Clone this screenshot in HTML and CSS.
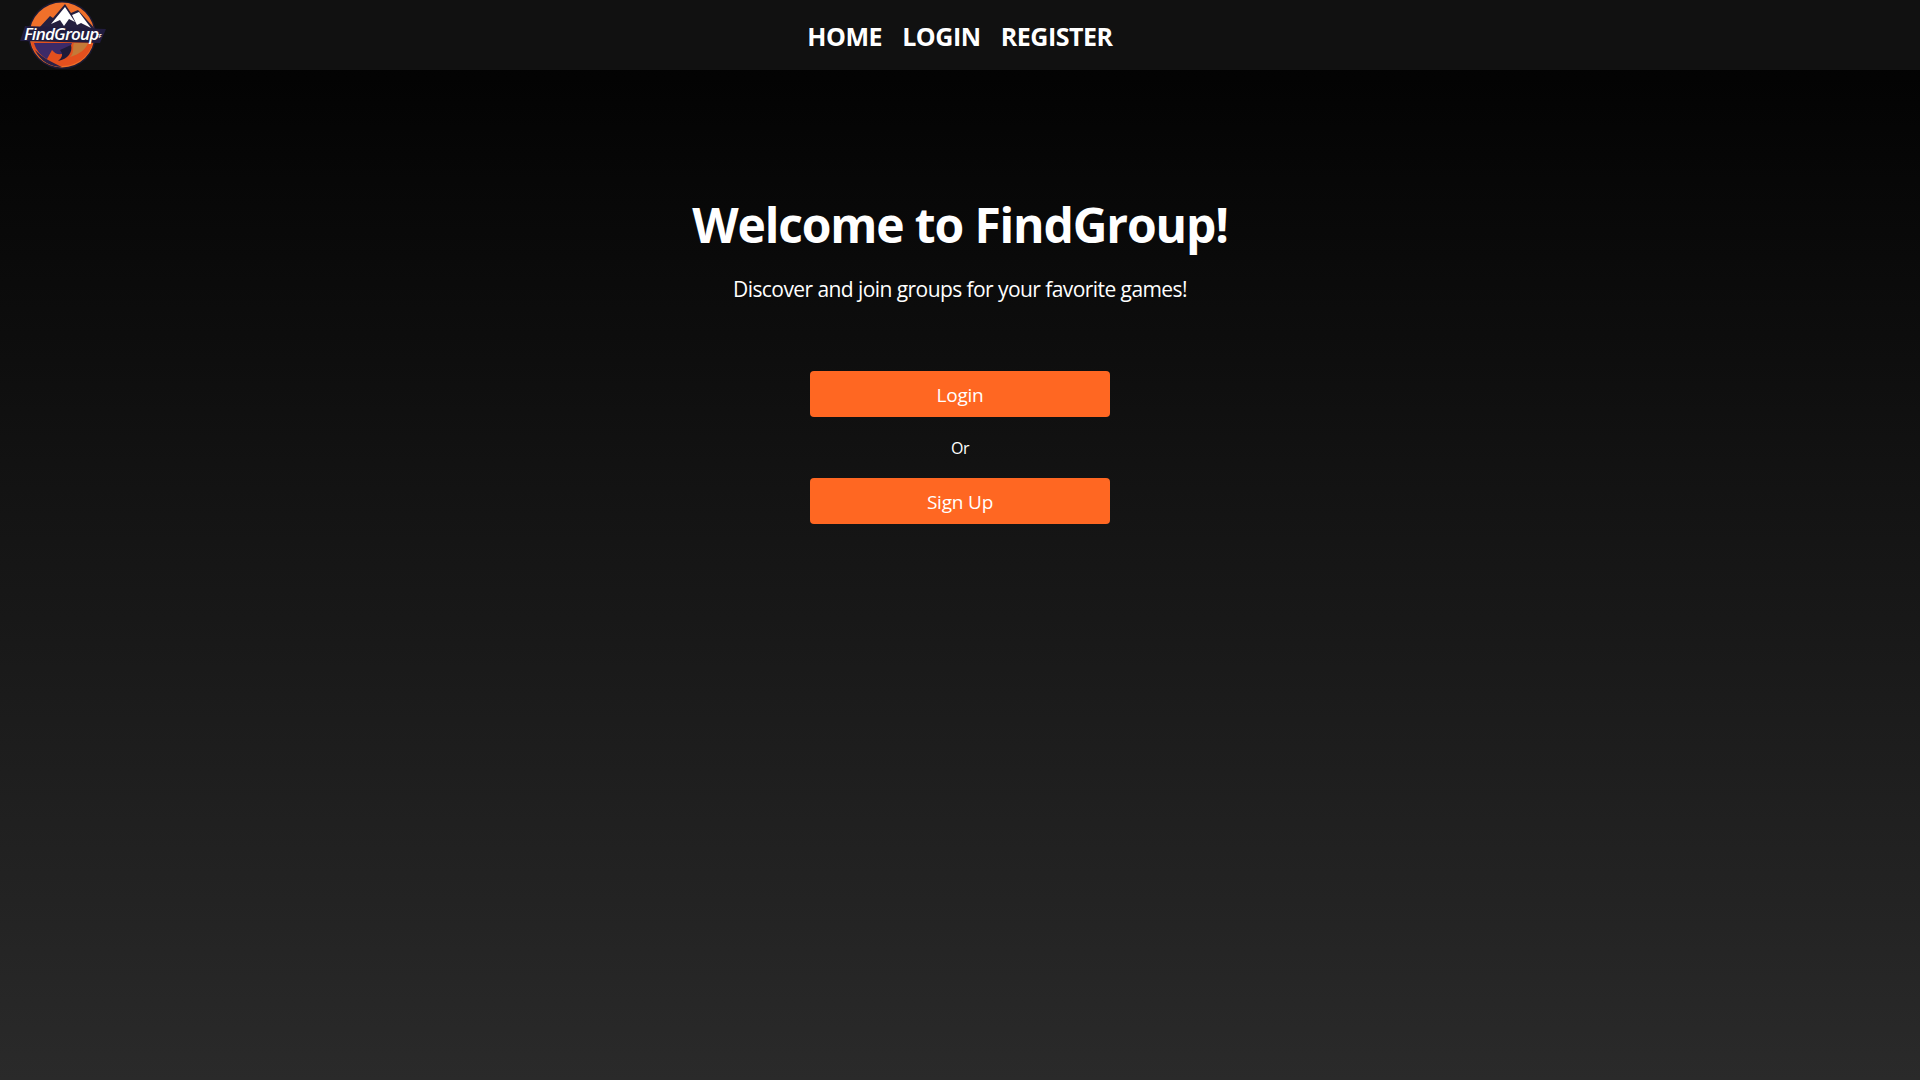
FILE: index.html
```html
<!DOCTYPE html>
<html lang="en">
<head>
<meta charset="utf-8">
<title>FindGroup</title>
<link rel="stylesheet" href="styles.css">
</head>
<body>
<header class="navbar">
  <a class="logo" href="#" aria-label="FindGroup">
    <svg class="logo-art" viewBox="20 0 90 70" width="90" height="70">
      <circle cx="62" cy="35" r="34" fill="#1d1a33"/>
      <circle cx="62" cy="35" r="32.5" fill="#f0702a"/>
      <path d="M31 42 C33 54 44 65 62 66 C78 66 90 55 93 42 Z" fill="#e4501e"/>
      <path d="M34 43 C36 50 40 55 47 59 L52 50 C58 58 68 54 72 43 Z" fill="#3d2a68"/>
      <path d="M74 43 L88 43 C86 49 80 54 70 57 C75 52 72 48 74 43 Z" fill="#c47a38"/>
      <path d="M35 50 C41 62 51 67 62 67 C52 62 44 59 35 50 Z" fill="#2a2148"/>
      <path d="M60 50 L71 45 C73 52 68 59 58 61 C63 57 63 54 60 50 Z" fill="#1f1a38"/>
      <path d="M38 29 L50 16 L53 18 L65 4 L71 13 L78 10 L95 29 Z" fill="#241f3f"/>
      <path d="M51 24 L65 7 L75 22 L69 19 L64 26 L60 20 Z" fill="#fff"/>
      <path d="M72 15 L79 12 L91 28 L81 23 L77 25 Z" fill="#fff"/>
      <path d="M25 26 L106 29 L100 43 L20 41 Z" fill="#211c3e"/>
    </svg>
    <span class="logo-text">FindGroup</span>
    <span class="logo-mark">FF</span>
  </a>
  <nav class="nav-links">
    <a href="#">HOME</a>
    <a href="#">LOGIN</a>
    <a href="#">REGISTER</a>
  </nav>
</header>
<main class="hero">
  <h1>Welcome to FindGroup!</h1>
  <p class="tagline">Discover and join groups for your favorite games!</p>
  <div class="actions">
    <a class="btn" href="#">Login</a>
    <span class="or">Or</span>
    <a class="btn" href="#">Sign Up</a>
  </div>
</main>
</body>
</html>
```
FILE: styles.css
```css
* { box-sizing: border-box; }
html, body { height: 100%; }
body {
  margin: 0;
  min-height: 1080px;
  font-family: "Open Sans", "Noto Sans", sans-serif;
  color: #fff;
  background: linear-gradient(180deg, #000 0%, #2a2a2a 100%);
  overflow: hidden;
}
a { color: inherit; text-decoration: none; }
.navbar {
  position: relative;
  height: 70px;
  background: #111;
  display: flex;
  justify-content: center;
  align-items: center;
}
.logo {
  position: absolute;
  left: 20px;
  top: 0;
  width: 90px;
  height: 70px;
}
.logo-art { display: block; }
.logo-text {
  position: absolute;
  left: 4px;
  top: 24px;
  font-size: 17px;
  line-height: 20px;
  font-weight: 600;
  font-style: italic;
  letter-spacing: -0.8px;
  white-space: nowrap;
}
.logo-mark {
  position: absolute;
  left: 76px;
  top: 33px;
  font-size: 5px;
  line-height: 6px;
  font-weight: 700;
  font-style: italic;
}
.nav-links {
  display: flex;
  gap: 20px;
  font-size: 25px;
  line-height: 34px;
  font-weight: 700;
  letter-spacing: -0.45px;
  margin-top: 2px;
}
.hero {
  display: flex;
  flex-direction: column;
  align-items: center;
  padding-top: 123px;
}
h1 {
  margin: 0;
  font-size: 48px;
  line-height: 64px;
  font-weight: 700;
  letter-spacing: -1.15px;
}
.tagline {
  margin: 19px 0 0;
  font-size: 21px;
  line-height: 27px;
  letter-spacing: -0.57px;
}
.actions {
  display: flex;
  flex-direction: column;
  align-items: center;
  margin-top: 68px;
}
.btn {
  width: 300px;
  height: 46px;
  background: #ff6722;
  border-radius: 4px;
  display: flex;
  align-items: center;
  justify-content: center;
  font-size: 19px;
  letter-spacing: -0.2px;
  padding-top: 2px;
}
.or {
  font-size: 16px;
  line-height: 21px;
  letter-spacing: -0.4px;
  margin: 21px 0 19px;
}
```
